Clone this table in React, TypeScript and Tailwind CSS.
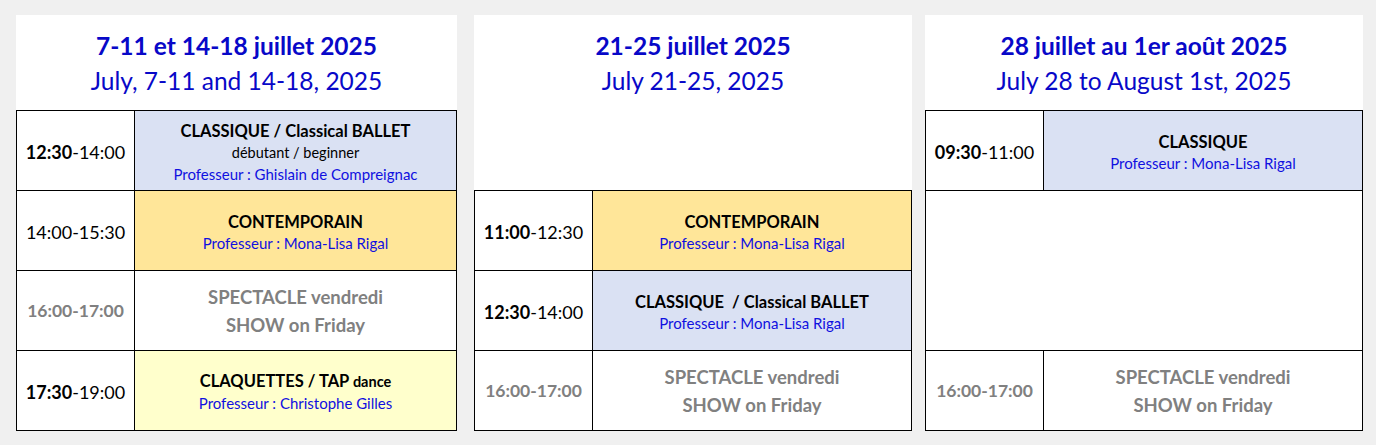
const FONT = "font-['Lato','Liberation_Sans',sans-serif]";

type Row =
  | { kind: "class"; h: string; start?: string; end: string; bg: string; title: React.ReactNode; sub?: string; prof: string }
  | { kind: "show"; h: string; time: string }
  | { kind: "empty"; h: string };

function Time({ start, end }: { start?: string; end: string }) {
  return (
    <span className="text-[18px] text-black">
      {start && <b className="font-bold">{start}</b>}
      {start ? "-" : ""}
      {end}
    </span>
  );
}

function TableRow({ row, last }: { row: Row; last: boolean }) {
  const base = `flex ${row.h} ${last ? "" : "border-b border-black"}`;
  if (row.kind === "empty") return <div className={`${base} bg-white`} />;
  if (row.kind === "show") {
    return (
      <div className={base}>
        <div className="w-[118px] shrink-0 border-r border-black bg-white flex items-center justify-center pt-[2px]">
          <span className="text-[17.5px] font-bold text-[#808080]">{row.time}</span>
        </div>
        <div className="flex-1 bg-white flex flex-col items-center justify-center leading-[28px] text-[18.5px] font-bold text-[#808080]">
          <span>SPECTACLE vendredi</span>
          <span>SHOW on Friday</span>
        </div>
      </div>
    );
  }
  return (
    <div className={base}>
      <div className="w-[118px] shrink-0 border-r border-black bg-white flex items-center justify-center pt-[4px]">
        <Time start={row.start} end={row.end} />
      </div>
      <div className={`flex-1 ${row.bg} flex flex-col items-center justify-center pt-[3px]`}>
        <span className="text-[16.5px] font-bold text-black leading-[22px] whitespace-pre">{row.title}</span>
        {row.sub && <span className="text-[14.5px] text-black leading-[22px]">{row.sub}</span>}
        <span className="text-[15px] text-[#1010e0] leading-[21px]">{row.prof}</span>
      </div>
    </div>
  );
}

function Panel({
  w,
  fr,
  en,
  rows,
}: {
  w: string;
  fr: string;
  en: string;
  rows: Row[];
}) {
  return (
    <div className={`${w} h-[416px] flex flex-col bg-white`}>
      <div className="flex-1 flex flex-col items-center pt-[15px] text-[#0808c8]">
        <div className="text-[24.5px] font-bold leading-[32px]">{fr}</div>
        <div className="text-[24.5px] leading-[38px]">{en}</div>
      </div>
      <div className="border border-black flex flex-col">
        {rows.map((r, i) => (
          <TableRow key={i} row={r} last={i === rows.length - 1} />
        ))}
      </div>
    </div>
  );
}

const BLUE = "bg-[#dae1f3]";
const GOLD = "bg-[#ffe699]";
const CREAM = "bg-[#ffffcc]";

export default function App() {
  return (
    <div className={`${FONT} w-[1376px] h-[445px] bg-[#f0f0f0] flex items-start pt-[15px] pl-[16px]`}>
      <Panel
        w="w-[441px]"
        fr="7-11 et 14-18 juillet 2025"
        en="July, 7-11 and 14-18, 2025"
        rows={[
          { kind: "class", h: "h-[80px]", start: "12:30", end: "14:00", bg: BLUE, title: "CLASSIQUE / Classical BALLET", sub: "débutant / beginner", prof: "Professeur : Ghislain de Compreignac" },
          { kind: "class", h: "h-[80px]", end: "14:00-15:30", bg: GOLD, title: "CONTEMPORAIN", prof: "Professeur : Mona-Lisa Rigal" },
          { kind: "show", h: "h-[80px]", time: "16:00-17:00" },
          {
            kind: "class",
            h: "h-[79px]",
            start: "17:30",
            end: "19:00",
            bg: CREAM,
            title: (
              <>
                CLAQUETTES / TAP <span className="text-[14.5px]">dance</span>
              </>
            ),
            prof: "Professeur : Christophe Gilles",
          },
        ]}
      />
      <div className="w-[17px] shrink-0" />
      <Panel
        w="w-[438px]"
        fr="21-25 juillet 2025"
        en="July 21-25, 2025"
        rows={[
          { kind: "class", h: "h-[80px]", start: "11:00", end: "12:30", bg: GOLD, title: "CONTEMPORAIN", prof: "Professeur : Mona-Lisa Rigal" },
          { kind: "class", h: "h-[80px]", start: "12:30", end: "14:00", bg: BLUE, title: "CLASSIQUE  / Classical BALLET", prof: "Professeur : Mona-Lisa Rigal" },
          { kind: "show", h: "h-[79px]", time: "16:00-17:00" },
        ]}
      />
      <div className="w-[13px] shrink-0" />
      <Panel
        w="w-[438px]"
        fr="28 juillet au 1er août 2025"
        en="July 28 to August 1st, 2025"
        rows={[
          { kind: "class", h: "h-[80px]", start: "09:30", end: "11:00", bg: BLUE, title: "CLASSIQUE", prof: "Professeur : Mona-Lisa Rigal" },
          { kind: "empty", h: "h-[160px]" },
          { kind: "show", h: "h-[79px]", time: "16:00-17:00" },
        ]}
      />
    </div>
  );
}
